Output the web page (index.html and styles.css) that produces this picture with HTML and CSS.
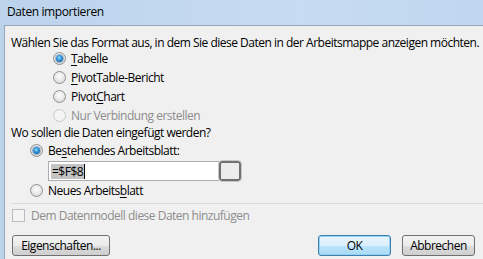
FILE: index.html
```html
<!DOCTYPE html>
<html lang="de">
<head>
    <meta charset="UTF-8">
    <title>Daten importieren</title>
    <link rel="stylesheet" href="styles.css">
</head>
<body>
    <div class="window">
        <div class="titlebar">Daten importieren</div>
        <div class="client">
            <p class="prompt">Wählen Sie das Format aus, in dem Sie diese Daten in der Arbeitsmappe anzeigen möchten.</p>
            <div class="options format">
                <label class="radio checked"><span class="dot"></span><span><u>T</u>abelle</span></label>
                <label class="radio"><span class="dot"></span><span><u>P</u>ivotTable-Bericht</span></label>
                <label class="radio"><span class="dot"></span><span>Pivot<u>C</u>hart</span></label>
                <label class="radio disabled"><span class="dot"></span><span>Nur Verbindung erstellen</span></label>
            </div>
            <p class="prompt second">Wo sollen die Daten eingefügt werden?</p>
            <div class="options place">
                <label class="radio checked"><span class="dot"></span><span>Be<u>s</u>tehendes Arbeitsblatt:</span></label>
                <div class="ref-row">
                    <div class="ref-field"><span class="sel">=$F$8</span><span class="caret"></span></div>
                    <span class="ref-btn"></span>
                </div>
                <label class="radio"><span class="dot"></span><span>Neues Arbeits<u>b</u>latt</span></label>
            </div>
            <div class="sep"></div>
            <label class="check disabled"><span class="box"></span><span>Dem Datenmodell diese Daten hinzufügen</span></label>
            <div class="actions">
                <button class="btn wide">Ei<u>g</u>enschaften...</button>
                <div class="spacer"></div>
                <button class="btn default">OK</button>
                <button class="btn">Abbrechen</button>
            </div>
        </div>
    </div>
</body>
</html>
```

FILE: styles.css
```css
* {
    margin: 0;
    padding: 0;
    box-sizing: border-box;
}
body {
    width: 483px;
    height: 259px;
    overflow: hidden;
    font-family: 'Open Sans', 'Noto Sans', sans-serif;
    font-size: 12px;
    line-height: 14px;
    letter-spacing: -0.5px;
    color: #000;
    background: #bed5ee;
}
.window {
    width: 500px;
    height: 259px;
    padding-left: 4px;
    background: linear-gradient(90deg, #bcd3ec 0%, #c7dcf2 60%, #bfd6ef 100%);
}
.titlebar {
    height: 25px;
    line-height: 24px;
    padding-left: 3px;
    letter-spacing: -0.4px;
}
.client {
    height: 234px;
    background: #f0f0f0;
    border-top: 1px solid #97a7b9;
    border-left: 1px solid #97a7b9;
    padding: 10px 0 0 6px;
    display: flex;
    flex-direction: column;
}
.prompt {
    height: 14px;
    white-space: nowrap;
}
.prompt.second {
    margin: 1px 0;
}
.options {
    display: flex;
    flex-direction: column;
}
.format {
    padding-left: 42px;
    margin-top: -1px;
}
.place {
    padding-left: 19px;
}
.radio, .check {
    display: flex;
    align-items: center;
    gap: 5px;
    height: 17px;
    margin: 1px 0;
    white-space: nowrap;
}
.dot {
    width: 13px;
    height: 13px;
    border-radius: 50%;
    border: 1px solid #8e8f8f;
    background: radial-gradient(circle at 50% 40%, #fdfdfd 0%, #e9e9e9 50%, #cfcfcf 100%);
    display: flex;
    align-items: center;
    justify-content: center;
}
.checked .dot::after {
    content: "";
    width: 7px;
    height: 7px;
    border-radius: 50%;
    background: radial-gradient(circle at 45% 40%, #8fe0ff 0%, #2a8dd4 45%, #0b4f8a 100%);
    box-shadow: 0 0 0 1px rgba(30, 80, 130, 0.35);
}
.disabled {
    color: #8d8d8d;
}
.disabled .dot {
    border-color: #c9c9c9;
    background: #f4f4f4;
}
.ref-row {
    display: flex;
    margin-top: 1px;
    padding-left: 18px;
    height: 20px;
}
.ref-field {
    width: 171px;
    height: 20px;
    background: #fff;
    border: 1px solid #abadb3;
    border-right: none;
    display: flex;
    align-items: center;
    padding-left: 2px;
}
.sel {
    background: #c4c4c4;
    line-height: 15px;
    padding: 0 1px;
}
.caret {
    width: 1px;
    height: 15px;
    background: #000;
}
.ref-btn {
    width: 22px;
    height: 20px;
    border: 2px solid #707070;
    border-radius: 3px;
    background: #ececec;
    outline: 1px solid #c8c8c8;
}
.sep {
    height: 1px;
    background: #d7dde3;
    margin-top: 3px;
}
.check {
    margin-top: 3px;
    gap: 6px;
}
.box {
    width: 13px;
    height: 13px;
    border: 1px solid #bcbcbc;
    background: #f4f4f4;
    margin-left: 1px;
}
.actions {
    display: flex;
    margin-top: 10px;
    padding-right: 4px;
    width: 468px;
}
.spacer {
    flex: 1;
}
.btn {
    font: inherit;
    letter-spacing: inherit;
    width: 73px;
    height: 21px;
    border: 1px solid #707070;
    border-radius: 3px;
    background: linear-gradient(#f2f2f2 0%, #ebebeb 50%, #dddddd 50%, #cfcfcf 100%);
    color: #000;
    margin-left: 11px;
}
.btn.wide {
    width: 98px;
    margin-left: 1px;
}
.btn.default {
    border-color: #3c7fb1;
    background: linear-gradient(#eaf6fd 0%, #d9f0fc 50%, #bee6fd 50%, #a7d9f5 100%);
    box-shadow: inset 0 0 0 1px #98d1ef;
}
u {
    text-decoration: underline;
    text-underline-offset: 2px;
}
```
